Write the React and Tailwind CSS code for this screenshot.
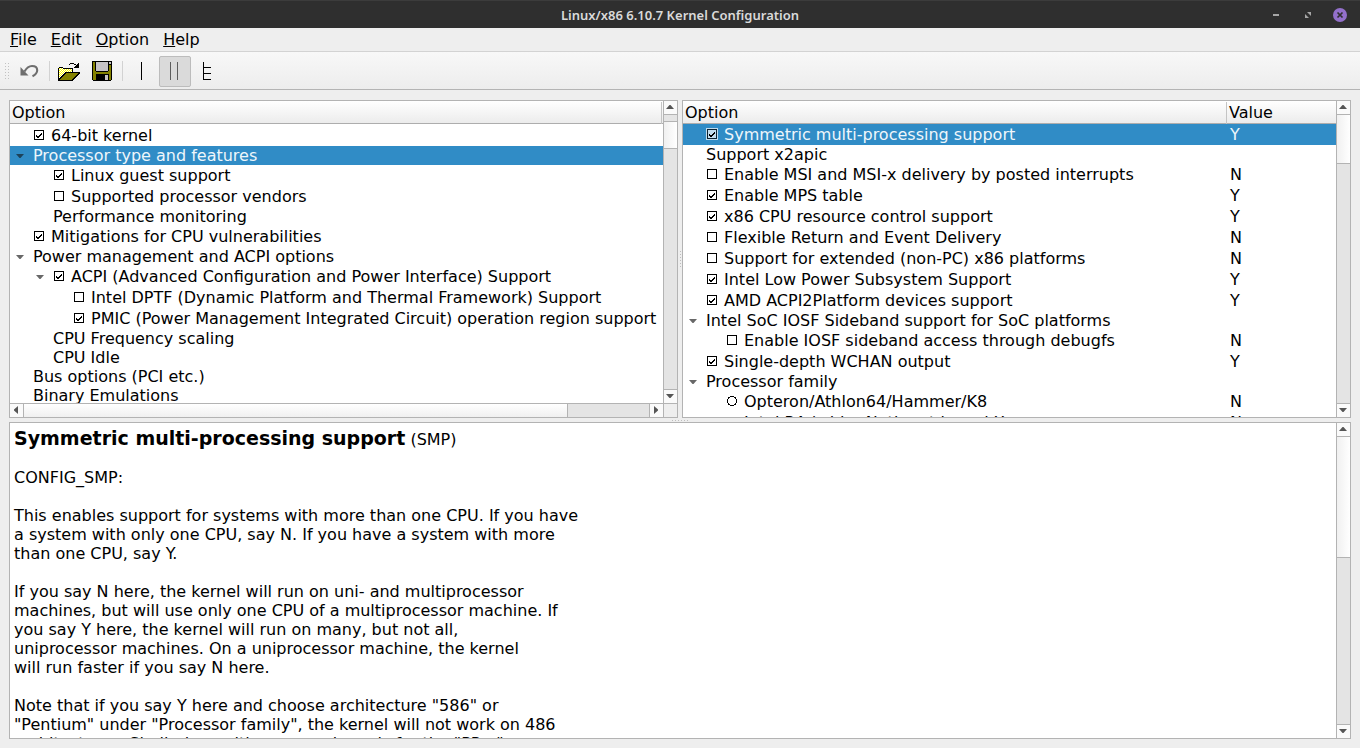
import React from "react";

const OPEN_MAP = [
  "......................",
  "......................",
  "......................",
  "............####....#.",
  "...........#....##.##.",
  "..................###.",
  ".................####.",
  ".####...........#####.",
  "#abab##########.......",
  "#babababababab#.......",
  "#ababababababa#.......",
  "#babababababab#.......",
  "#ababab###############",
  "#babab##cccccccccccc##",
  "#abab##cccccccccccc##.",
  "#bab##cccccccccccc##..",
  "#ab##cccccccccccc##...",
  "#b##cccccccccccc##....",
  "###cccccccccccc##.....",
  "##cccccccccccc##......",
  "###############.......",
];

const SAVE_MAP = [
  "......................",
  ".####################.",
  ".#cc#dddddddddddd#dd#.",
  ".#cc#dddddddddddd#dd#.",
  ".#cc#dddddddddddd####.",
  ".#cc#dddddddddddd#cc#.",
  ".#cc#dddddddddddd#cc#.",
  ".#cc#dddddddddddd#cc#.",
  ".#cc#dddddddddddd#cc#.",
  ".#cc#dddddddddddd#cc#.",
  ".#cc#dddddddddddd#cc#.",
  ".#ccc############ccc#.",
  ".#cccccccccccccccccc#.",
  ".#cccccccccccccccccc#.",
  ".#ccc#############cc#.",
  ".#ccc#########ddd#cc#.",
  ".#ccc#########ddd#cc#.",
  ".#ccc#########ddd#cc#.",
  ".#ccc#########ddd#cc#.",
  ".#ccc#########ddd#cc#.",
  "..##################..",
];

const CHECK_MAP = [
  "............",
  "............",
  "............",
  "............",
  "........#...",
  ".......##...",
  "...#..##....",
  "...####.....",
  "....##......",
];

const RADIO_MAP = [
  "............",
  "....####....",
  "..##....##..",
  "..#......#..",
  ".#........#.",
  ".#........#.",
  ".#........#.",
  ".#........#.",
  "..#......#..",
  "..##....##..",
  "....####....",
];

const PALETTE = { "#": "#000000", a: "#ffff00", b: "#ffffff", c: "#838100", d: "#c6c3c6" };

function PixelIcon({ map, size, className = "" }) {
  const runs = [];
  map.forEach((line, y) => {
    let x = 0;
    while (x < line.length) {
      let end = x + 1;
      while (end < line.length && line[end] === line[x]) end++;
      if (line[x] !== ".") {
        runs.push(<rect key={`${x}-${y}`} x={x} y={y} width={end - x} height={1} fill={PALETTE[line[x]]} />);
      }
      x = end;
    }
  });
  return (
    <svg width={size} height={size} viewBox={`0 0 ${size} ${size}`} shapeRendering="crispEdges" className={className} aria-hidden="true">
      {runs}
    </svg>
  );
}

const LEFT_ROWS = [
  { label: "64-bit kernel", level: 0, mark: "yes" },
  { label: "Processor type and features", level: 0, open: true, selected: true },
  { label: "Linux guest support", level: 1, mark: "yes" },
  { label: "Supported processor vendors", level: 1, mark: "no" },
  { label: "Performance monitoring", level: 1 },
  { label: "Mitigations for CPU vulnerabilities", level: 0, mark: "yes" },
  { label: "Power management and ACPI options", level: 0, open: true },
  { label: "ACPI (Advanced Configuration and Power Interface) Support", level: 1, open: true, mark: "yes" },
  { label: "Intel DPTF (Dynamic Platform and Thermal Framework) Support", level: 2, mark: "no" },
  { label: "PMIC (Power Management Integrated Circuit) operation region support", level: 2, mark: "yes" },
  { label: "CPU Frequency scaling", level: 1 },
  { label: "CPU Idle", level: 1 },
  { label: "Bus options (PCI etc.)", level: 0 },
  { label: "Binary Emulations", level: 0 },
];

const RIGHT_ROWS = [
  { label: "Symmetric multi-processing support", level: 0, mark: "yes", value: "Y", selected: true },
  { label: "Support x2apic", level: 0 },
  { label: "Enable MSI and MSI-x delivery by posted interrupts", level: 0, mark: "no", value: "N" },
  { label: "Enable MPS table", level: 0, mark: "yes", value: "Y" },
  { label: "x86 CPU resource control support", level: 0, mark: "yes", value: "Y" },
  { label: "Flexible Return and Event Delivery", level: 0, mark: "no", value: "N" },
  { label: "Support for extended (non-PC) x86 platforms", level: 0, mark: "no", value: "N" },
  { label: "Intel Low Power Subsystem Support", level: 0, mark: "yes", value: "Y" },
  { label: "AMD ACPI2Platform devices support", level: 0, mark: "yes", value: "Y" },
  { label: "Intel SoC IOSF Sideband support for SoC platforms", level: 0, open: true },
  { label: "Enable IOSF sideband access through debugfs", level: 1, mark: "no", value: "N" },
  { label: "Single-depth WCHAN output", level: 0, mark: "yes", value: "Y" },
  { label: "Processor family", level: 0, open: true },
  { label: "Opteron/Athlon64/Hammer/K8", level: 1, mark: "radio", value: "N" },
  { label: "Intel P4 / older Netburst based Xeon", level: 1, mark: "radio", value: "N" },
];

const INDENT = ["w-0", "w-5", "w-10"];

function Mark({ mark, selected }) {
  if (mark === "radio") {
    return (
      <span className="relative mb-px size-3 shrink-0">
        <input type="radio" name="processor-family" className="block size-3 appearance-none rounded-full bg-white" />
        <PixelIcon map={RADIO_MAP} size={12} className="pointer-events-none absolute inset-0" />
      </span>
    );
  }
  return (
    <span className={`relative mb-px size-3 shrink-0 p-px ${selected ? "bg-[#c1dcee]" : "bg-white"}`}>
      <input
        type="checkbox"
        defaultChecked={mark === "yes"}
        className={`peer block size-2.5 appearance-none border ${selected ? "border-[#0c2331]" : "border-black"}`}
      />
      <PixelIcon map={CHECK_MAP} size={12} className="pointer-events-none absolute inset-0 hidden peer-checked:block" />
    </span>
  );
}

function OptionCell({ row }) {
  return (
    <div className="flex items-center">
      <span className={`shrink-0 ${INDENT[row.level]}`} />
      <span className="mr-[3px] flex w-5 shrink-0 justify-center">
        {row.open && (
          <button type="button" aria-label={`Collapse ${row.label}`} aria-expanded="true" className="flex h-4 w-5 items-center justify-center">
            <svg width="8" height="4" viewBox="0 0 8 4" aria-hidden="true" className={row.selected ? "fill-[#1d4259]" : "fill-[#686868]"}>
              <path d="M0 0h8L4.5 4h-1z" />
            </svg>
          </button>
        )}
      </span>
      {row.mark ? (
        <label className="flex items-center gap-1.5">
          <Mark mark={row.mark} selected={row.selected} />
          {row.label}
        </label>
      ) : (
        <span>{row.label}</span>
      )}
    </div>
  );
}

function OptionTable({ rows, withValue }) {
  return (
    <table className="w-full table-fixed border-collapse whitespace-nowrap text-left leading-[19px]">
      <thead>
        <tr className="h-[23px] bg-linear-to-b from-white to-[#ebebeb] shadow-[inset_0_-1px_0_#adadad]">
          <th className="p-0 font-normal">
            <div className={`flex h-[22px] items-center border-r border-[#c4c4c4] pl-0.5 ${withValue ? "" : "mr-px"}`}>Option</div>
          </th>
          {withValue && <th className="w-[109px] p-0 pl-0.5 font-normal">Value</th>}
        </tr>
      </thead>
      <tbody className={withValue ? "" : "before:block before:h-px"}>
        {rows.map((row) => (
          <tr
            key={row.label}
            className={`${row.mark ? "h-[21px]" : "h-[19px]"} ${row.selected ? "bg-[#308cc6] text-[#eef6fb]" : ""}`}
          >
            <td className="p-0">
              <OptionCell row={row} />
            </td>
            {withValue && <td className="p-0 pl-[3px]">{row.value}</td>}
          </tr>
        ))}
      </tbody>
    </table>
  );
}

const ARROWS = {
  up: { w: 8, h: 4, d: "M0 4h8L4.5 0h-1z" },
  down: { w: 8, h: 4, d: "M0 0h8L4.5 4h-1z" },
  left: { w: 4, h: 8, d: "M4 0v8L0 4.5v-1z" },
  right: { w: 4, h: 8, d: "M0 0v8l4-3.5v-1z" },
};

function ScrollButton({ dir, className }) {
  const a = ARROWS[dir];
  return (
    <button
      type="button"
      aria-label={`Scroll ${dir}`}
      className={`flex shrink-0 items-center justify-center border-[#b3b3b3] bg-[#fafafa] pb-px pr-px ${className}`}
    >
      <svg width={a.w} height={a.h} viewBox={`0 0 ${a.w} ${a.h}`} className="fill-[#555555]" aria-hidden="true">
        <path d={a.d} />
      </svg>
    </button>
  );
}

function VerticalScrollbar({ before, thumb }) {
  return (
    <div className="flex min-h-0 w-3.5 flex-1 flex-col border-l border-[#b3b3b3] bg-[#e4e4e4]">
      <ScrollButton dir="up" className="h-3.5 border-b" />
      <div className="min-h-0 flex-1">
        <div className={before} />
        <div className={`border-b border-[#b3b3b3] bg-linear-to-r from-[#f0f0f0] to-white ${thumb}`} />
      </div>
      <ScrollButton dir="down" className="h-3.5 border-t" />
    </div>
  );
}

function Dots({ vertical }) {
  return (
    <svg
      width={vertical ? 3 : 17}
      height={vertical ? 17 : 3}
      viewBox={vertical ? "0 0 3 17" : "0 0 17 3"}
      shapeRendering="crispEdges"
      className="fill-[#bdbdbd]"
      aria-hidden="true"
    >
      {[0, 3, 6, 9, 12, 15].map((p) => (
        <rect key={p} x={vertical ? 1 : p} y={vertical ? p : 1} width="1" height="1" />
      ))}
    </svg>
  );
}

const HELP = `CONFIG_SMP:

This enables support for systems with more than one CPU. If you have
a system with only one CPU, say N. If you have a system with more
than one CPU, say Y.

If you say N here, the kernel will run on uni- and multiprocessor
machines, but will use only one CPU of a multiprocessor machine. If
you say Y here, the kernel will run on many, but not all,
uniprocessor machines. On a uniprocessor machine, the kernel
will run faster if you say N here.

Note that if you say Y here and choose architecture "586" or
"Pentium" under "Processor family", the kernel will not work on 486
architectures. Similarly, multiprocessor kernels for the "PPro"`;

function TitleBar() {
  return (
    <header className="grid h-7 shrink-0 grid-cols-[1fr_auto_1fr] items-center border-t border-[#3c3c3c] bg-[#2f2f2f]">
      <span />
      <h1 className="font-['Noto_Sans',sans-serif] text-[13px] font-semibold leading-4 text-[#dadada]">
        Linux/x86 6.10.7 Kernel Configuration
      </h1>
      <div className="flex items-center justify-end gap-4 pr-3">
        <button type="button" aria-label="Minimize" className="flex size-4 items-center justify-center">
          <svg width="6" height="2" viewBox="0 0 6 2" aria-hidden="true"><path d="M0 0h6v2H0z" fill="#a6a6a6" /></svg>
        </button>
        <button type="button" aria-label="Restore" className="flex size-4 items-center justify-center">
          <svg width="6" height="6" viewBox="0 0 6 6" aria-hidden="true">
            <path d="M2 0h4v4zM0 2l4 4H0z" fill="#a6a6a6" />
          </svg>
        </button>
        <button type="button" aria-label="Close" className="flex size-4 items-center justify-center">
          <svg width="14" height="14" viewBox="0 0 14 14" aria-hidden="true">
            <circle cx="7" cy="7" r="7" fill="#9370cb" />
            <path d="M4.5 4.5l5 5M9.5 4.5l-5 5" stroke="#2f2f2f" strokeWidth="1.7" />
          </svg>
        </button>
      </div>
    </header>
  );
}

function ToolBar() {
  return (
    <div role="toolbar" aria-label="Main" className="flex h-[38px] shrink-0 items-center border-b border-[#b4b4b4] bg-linear-to-b from-[#f8f8f8] to-[#ededed] pl-[5px] pt-px">
      <svg width="5" height="17" viewBox="0 0 5 17" shapeRendering="crispEdges" className="mr-1.5 fill-[#c2c2c2]" aria-hidden="true">
        {[0, 3, 6, 9, 12, 15].map((y) => (
          <path key={y} d={`M0 ${y}h1v1H0zM3 ${y}h1v1H3z`} />
        ))}
      </svg>
      <button type="button" aria-label="Undo" className="flex h-8 w-[26px] items-center justify-center">
        <svg width="20" height="16" viewBox="0 0 20 16" aria-hidden="true">
          <path d="M1.500 4V12.500H9.500z" fill="#6e6e6e" />
          <path d="M5.500 8.500C7.500 5 10 3 13 3c3.200 0 5.200 1.800 5.200 4.300 0 2.600-1.700 4.400-4.700 5.900" fill="none" stroke="#6e6e6e" strokeWidth="2.1" />
        </svg>
      </button>
      <div className="ml-[7px] mr-2 h-5 w-px bg-[#d2d2d2]" />
      <button type="button" aria-label="Load" className="mr-[11px]"><PixelIcon map={OPEN_MAP} size={22} /></button>
      <button type="button" aria-label="Save"><PixelIcon map={SAVE_MAP} size={22} /></button>
      <div className="ml-[9px] mr-0.5 h-5 w-px bg-[#d2d2d2]" />
      <button type="button" aria-label="Single View" className="flex h-8 w-8 items-center justify-center">
        <svg width="22" height="22" viewBox="0 0 22 22" shapeRendering="crispEdges" aria-hidden="true">
          <path d="M11 2h1v18h-1z" />
        </svg>
      </button>
      <button type="button" aria-label="Split View" aria-pressed="true" className="ml-0.5 flex h-[31px] w-8 items-center justify-center rounded-xs border border-[#bcbcbc] bg-[#dadada]">
        <svg width="22" height="22" viewBox="0 0 22 22" shapeRendering="crispEdges" fill="#5c5c5c" aria-hidden="true">
          <path d="M6 2h1v18H6zM13 2h1v18h-1z" />
        </svg>
      </button>
      <button type="button" aria-label="Full View" className="ml-px flex h-8 w-8 items-center justify-center">
        <svg width="22" height="22" viewBox="0 0 22 22" shapeRendering="crispEdges" aria-hidden="true">
          <path d="M6 2h1v18H6zM7 7h7v1H7zM7 13h7v1H7zM7 19h7v1H7z" />
        </svg>
      </button>
    </div>
  );
}

export default function App() {
  return (
    <div className="flex h-screen flex-col bg-[#eeeeee] font-['DejaVu_Sans',sans-serif] text-base text-black">
      <TitleBar />
      <nav aria-label="Menu" className="flex h-6 shrink-0 items-center gap-3.5 border-b border-[#d3d3d3] pl-2.5 leading-[19px]">
        <button type="button"><u>F</u>ile</button>
        <button type="button"><u>E</u>dit</button>
        <button type="button"><u>O</u>ption</button>
        <button type="button"><u>H</u>elp</button>
      </nav>
      <ToolBar />

      <main className="flex min-h-0 flex-1 flex-col px-[9px] pb-[9px] pt-2.5">
        <div className="flex min-h-0 flex-[1_1_3px]">
          <section aria-label="Menu tree" className="flex min-w-0 flex-1 border border-[#b3b3b3] bg-white">
            <div className="flex min-w-0 flex-1 flex-col">
              <div className="min-h-0 flex-1 overflow-hidden">
                <OptionTable rows={LEFT_ROWS} />
              </div>
              <div className="flex h-3.5 shrink-0 border-t border-[#b3b3b3] bg-[#e4e4e4]">
                <ScrollButton dir="left" className="w-3.5 border-r" />
                <div className="min-w-0 flex-1">
                  <div className="h-full w-[87%] border-r border-[#b3b3b3] bg-linear-to-b from-white to-[#f0f0f0]" />
                </div>
                <ScrollButton dir="right" className="w-3.5 border-l" />
              </div>
            </div>
            <div className="flex shrink-0 flex-col">
              <VerticalScrollbar before="h-1.5" thumb="h-7 border-t" />
              <div className="h-3.5 border-l border-t border-[#b3b3b3] bg-[#eeeeee]" />
            </div>
          </section>
          <div className="flex w-1 shrink-0 items-center justify-center"><Dots vertical /></div>
          <section aria-label="Options" className="flex min-w-0 flex-1 border border-[#b3b3b3] bg-white">
            <div className="min-w-0 flex-1 overflow-hidden">
              <OptionTable rows={RIGHT_ROWS} withValue />
            </div>
            <div className="flex shrink-0 flex-col">
              <VerticalScrollbar before="h-0" thumb="h-[49px]" />
            </div>
          </section>
        </div>
        <div className="flex h-1 shrink-0 items-center justify-center"><Dots /></div>
        <section aria-label="Help" className="flex min-h-0 flex-[1_1_0px] border border-[#b3b3b3] bg-white">
          <div className="min-w-0 flex-1 overflow-hidden p-1 leading-[19px]">
            <h2 className="mb-[19px] h-[22px] leading-[22px]">
              <b className="text-[19px]">Symmetric multi-processing support</b> (SMP)
            </h2>
            <p className="whitespace-pre">{HELP}</p>
          </div>
          <div className="flex shrink-0 flex-col">
            <VerticalScrollbar before="h-0" thumb="h-[121px]" />
          </div>
        </section>
      </main>
    </div>
  );
}
